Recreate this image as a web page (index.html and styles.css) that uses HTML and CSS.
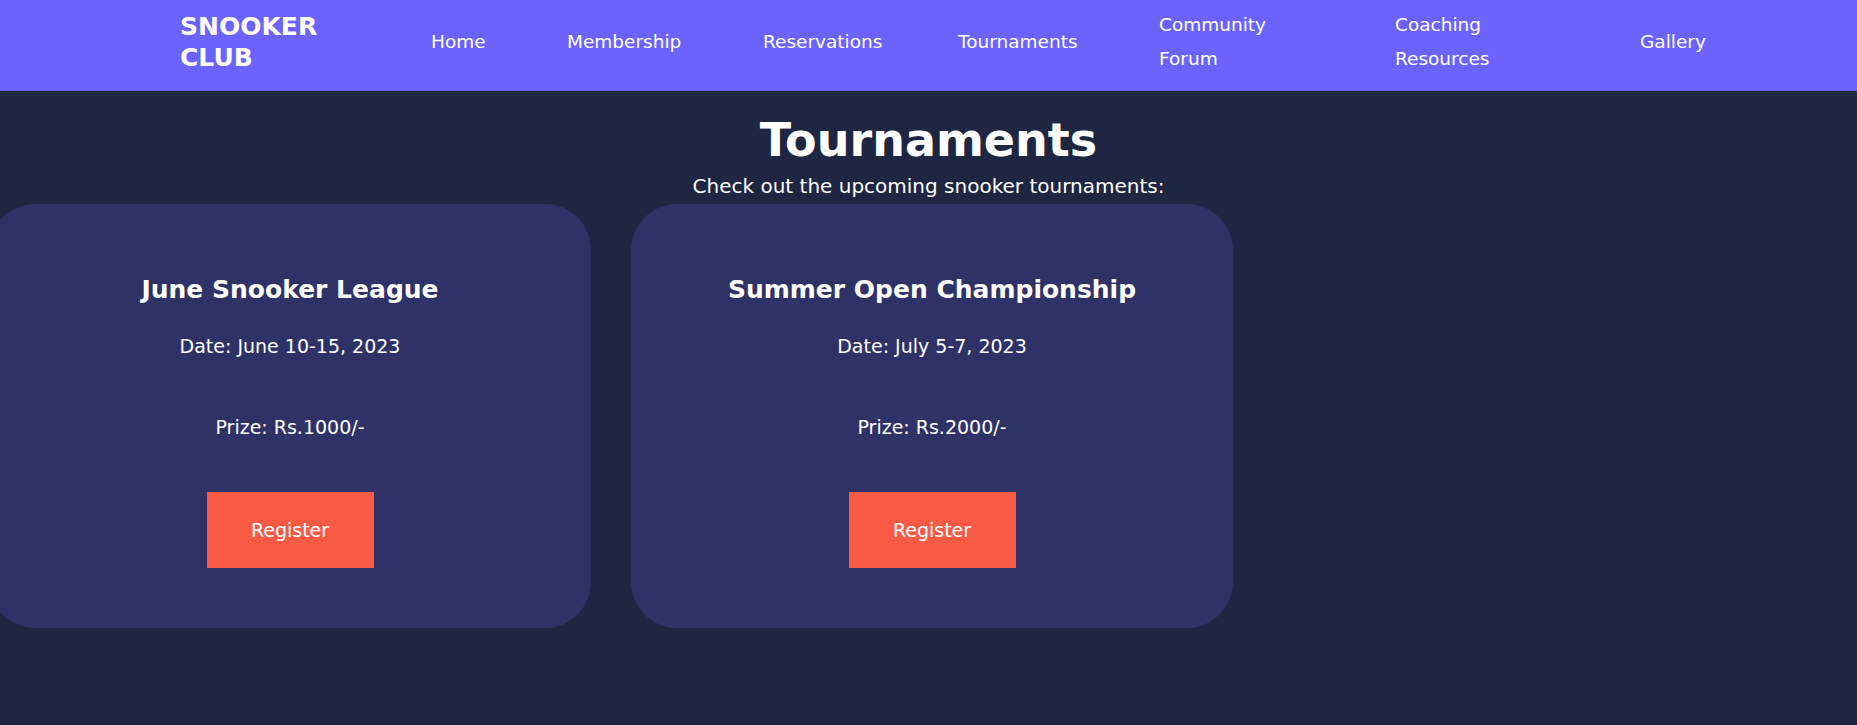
FILE: index.html
```html
<!DOCTYPE html>
<html lang="en">
<head>
<meta charset="utf-8">
<title>Snooker Club - Tournaments</title>
<link rel="stylesheet" href="styles.css">
</head>
<body>
<header class="site-header">
  <div class="logo">SNOOKER<br>CLUB</div>
  <nav class="main-nav">
    <a href="#" class="nav-link">Home</a>
    <a href="#" class="nav-link">Membership</a>
    <a href="#" class="nav-link">Reservations</a>
    <a href="#" class="nav-link">Tournaments</a>
    <a href="#" class="nav-link">Community Forum</a>
    <a href="#" class="nav-link">Coaching Resources</a>
    <a href="#" class="nav-link">Gallery</a>
  </nav>
</header>
<main class="content">
  <h1 class="page-title">Tournaments</h1>
  <p class="page-sub">Check out the upcoming snooker tournaments:</p>
  <div class="cards">
    <div class="card">
      <h2 class="card-title">June Snooker League</h2>
      <p class="card-date">Date: June 10-15, 2023</p>
      <p class="card-prize">Prize: Rs.1000/-</p>
      <a href="#" class="btn">Register</a>
    </div>
    <div class="card">
      <h2 class="card-title">Summer Open Championship</h2>
      <p class="card-date">Date: July 5-7, 2023</p>
      <p class="card-prize">Prize: Rs.2000/-</p>
      <a href="#" class="btn">Register</a>
    </div>
  </div>
</main>
</body>
</html>
```
FILE: styles.css
```css
* { box-sizing: border-box; }

html, body {
  margin: 0;
  padding: 0;
}

html {
  background: #1f2642;
}

body {
  color: #ffffff;
  font-family: "DejaVu Sans", "Liberation Sans", sans-serif;
}

.site-header {
  background: #6c63ff;
  height: 91px;
  display: flex;
  align-items: center;
  padding: 0 0 7px 180px;
}

.logo {
  flex: 0 0 251px;
  font-weight: 700;
  font-size: 25px;
  line-height: 31.5px;
}

.main-nav {
  display: grid;
  grid-template-columns: 56px 116px 115px 121px 156px 165px auto;
  column-gap: 80px;
  align-items: center;
}

.nav-link {
  color: #ffffff;
  text-decoration: none;
  font-size: 18.5px;
  line-height: 34px;
}

.content {
  text-align: center;
}

.page-title {
  margin: 21px 0 0;
  font-size: 46px;
  line-height: 56px;
  font-weight: 700;
}

.page-sub {
  margin: 6px 0 0;
  font-size: 20px;
  line-height: 25px;
}

.cards {
  display: flex;
  gap: 40px;
  margin: 5px 0 0 -11px;
}

.card {
  flex: 0 0 602px;
  background: #2f3266;
  border-radius: 46px;
  padding: 71px 20px 60px;
  text-align: center;
}

.card-title {
  margin: 0;
  font-size: 25px;
  line-height: 30px;
  font-weight: 700;
}

.card-date {
  margin: 29px 0 0;
  font-size: 19px;
  line-height: 24px;
}

.card-prize {
  margin: 57px 0 0;
  font-size: 19px;
  line-height: 24px;
}

.btn {
  display: inline-block;
  margin-top: 53px;
  background: #f85a44;
  color: #ffffff;
  text-decoration: none;
  font-size: 19px;
  line-height: 24px;
  padding: 26px 0;
  width: 167px;
}
```
